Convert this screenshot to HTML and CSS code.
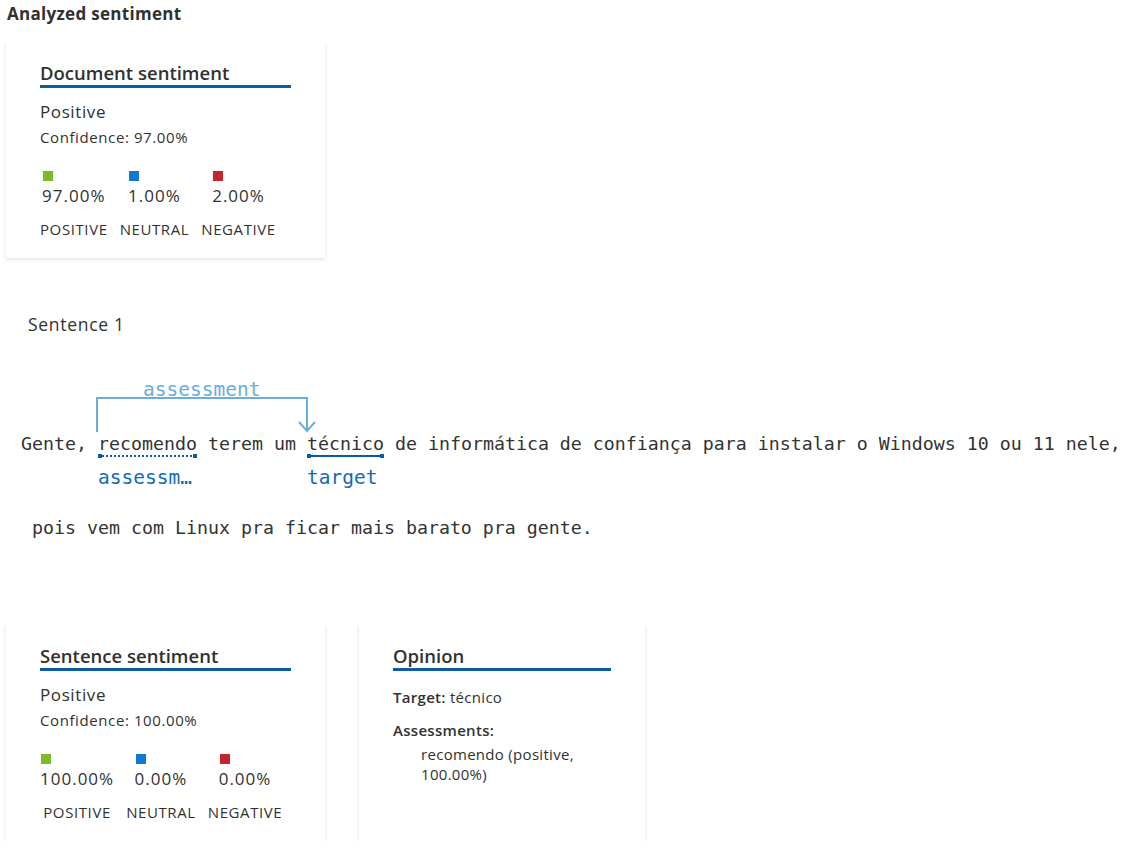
FILE: index.html
```html
<!DOCTYPE html>
<html lang="pt">
<head>
<meta charset="utf-8">
<title>Analyzed sentiment</title>
<link rel="stylesheet" href="styles.css">
</head>
<body>
<main class="page">
  <h2 class="page-title">Analyzed sentiment</h2>

  <section class="card doc-card">
    <h3 class="card-title">Document sentiment</h3>
    <div class="overall">Positive</div>
    <div class="confidence">Confidence: 97.00%</div>
    <div class="legend">
      <div class="col">
        <div class="metric"><span class="sq sq-pos"></span><span class="val">97.00%</span></div>
        <div class="lbl">POSITIVE</div>
      </div>
      <div class="col">
        <div class="metric"><span class="sq sq-neu"></span><span class="val">1.00%</span></div>
        <div class="lbl">NEUTRAL</div>
      </div>
      <div class="col">
        <div class="metric"><span class="sq sq-neg"></span><span class="val">2.00%</span></div>
        <div class="lbl">NEGATIVE</div>
      </div>
    </div>
  </section>

  <div class="sentence-title">Sentence 1</div>

  <div class="diagram">
    <div class="line line1"><svg class="arc" width="230" height="48" viewBox="0 0 230 48"><path d="M7 45 V11 H217 V44" /><path d="M209 35 L217 44 L225 35" /></svg><span class="arc-label">assessment</span>Gente, <span class="tok tok-assess">recomendo<span class="mark mark-dotted"></span><span class="tag">assessm…</span></span> terem um <span class="tok tok-target">técnico<span class="mark mark-solid"></span><span class="tag">target</span></span> de informática de confiança para instalar o Windows 10 ou 11 nele,</div>
    <div class="line line2"> pois vem com Linux pra ficar mais barato pra gente.</div>
  </div>

  <div class="bottom-cards">
    <section class="card sent-card">
      <h3 class="card-title">Sentence sentiment</h3>
      <div class="overall">Positive</div>
      <div class="confidence">Confidence: 100.00%</div>
      <div class="legend">
        <div class="col">
          <div class="metric"><span class="sq sq-pos"></span><span class="val">100.00%</span></div>
          <div class="lbl">POSITIVE</div>
        </div>
        <div class="col">
          <div class="metric"><span class="sq sq-neu"></span><span class="val">0.00%</span></div>
          <div class="lbl">NEUTRAL</div>
        </div>
        <div class="col">
          <div class="metric"><span class="sq sq-neg"></span><span class="val">0.00%</span></div>
          <div class="lbl">NEGATIVE</div>
        </div>
      </div>
    </section>

    <section class="card opinion-card">
      <h3 class="card-title">Opinion</h3>
      <div class="op-row op-target"><span class="op-key">Target:</span> técnico</div>
      <div class="op-row op-assess"><span class="op-key">Assessments:</span></div>
      <div class="op-item">recomendo (positive, 100.00%)</div>
    </section>
  </div>
</main>
</body>
</html>
```

FILE: styles.css
```css
html, body {
  margin: 0;
  padding: 0;
  background: #ffffff;
}

body {
  font-family: "Open Sans", "Noto Sans", sans-serif;
  color: #323130;
}

.page {
  padding: 4px 0 0 6px;
}

.page-title {
  margin: 0 0 0 1px;
  font-size: 17px;
  line-height: 20px;
  font-weight: 700;
  letter-spacing: 0.3px;
  color: #323130;
}

.card {
  box-sizing: border-box;
  height: 217px;
  padding: 20px 34px 0;
  background: #ffffff;
  box-shadow: 0 1.6px 3.6px rgba(0, 0, 0, 0.13), 0 0.3px 0.9px rgba(0, 0, 0, 0.11);
}

.doc-card {
  width: 319px;
  margin-top: 17px;
}

.card-title {
  margin: 0;
  font-size: 18.5px;
  line-height: 24px;
  font-weight: 600;
  color: #323130;
  border-bottom: 3px solid #0f5ca6;
}

.overall {
  margin-top: 13px;
  font-size: 17px;
  line-height: 22px;
  letter-spacing: 0.6px;
}

.confidence {
  margin-top: 5px;
  font-size: 15px;
  line-height: 18px;
  letter-spacing: 0.6px;
}

.legend {
  display: flex;
  gap: 12px;
  margin-top: 25px;
}

.col {
  display: flex;
  flex-direction: column;
  align-items: center;
}

.metric {
  display: flex;
  flex-direction: column;
  align-items: flex-start;
}

.sq {
  display: block;
  width: 10px;
  height: 10px;
  margin-left: 1px;
}

.sq-pos { background: #7cbb26; }
.sq-neu { background: #0f78d4; }
.sq-neg { background: #c4262e; }

.val {
  margin-top: 4px;
  font-size: 17px;
  line-height: 22px;
  letter-spacing: 1px;
}

.lbl {
  margin-top: 13px;
  font-size: 15px;
  line-height: 18px;
  letter-spacing: 0.6px;
}

.sentence-title {
  margin: 55px 0 0 22px;
  font-size: 17.5px;
  line-height: 22px;
  letter-spacing: 0.7px;
}

.diagram {
  margin-left: 15px;
  font-family: "DejaVu Sans Mono", "Liberation Mono", monospace;
  font-size: 18.27px;
  color: #333333;
}

.line {
  white-space: pre;
  line-height: 24px;
}

.line1 {
  position: relative;
  margin-top: 97px;
}

.line2 {
  margin-top: 60px;
}

.arc {
  position: absolute;
  left: 69px;
  top: -45px;
  overflow: visible;
}

.arc path {
  fill: none;
  stroke: #6aaedb;
  stroke-width: 2;
}

.arc-label {
  position: absolute;
  left: 122px;
  top: -54px;
  font-size: 19.5px;
  line-height: 24px;
  color: #6aaedb;
}

.tok {
  position: relative;
  display: inline-block;
}

.mark {
  position: absolute;
  left: 0;
  right: 0;
  top: 23px;
  height: 2px;
}

.mark::before,
.mark::after {
  content: "";
  position: absolute;
  top: -1px;
  width: 4px;
  height: 4px;
  background: #0b59a1;
}

.mark::before { left: 0; }
.mark::after { right: 0; }

.mark-dotted {
  background: repeating-linear-gradient(90deg, #0b59a1 0 2px, transparent 2px 4px);
}

.mark-solid {
  background: #0b59a1;
}

.tag {
  position: absolute;
  left: 0;
  top: 34px;
  font-size: 19.5px;
  line-height: 24px;
  color: #116cb6;
  white-space: nowrap;
}

.bottom-cards {
  display: flex;
  gap: 34px;
  margin-top: 84px;
}

.sent-card {
  width: 319px;
}

.opinion-card {
  width: 286px;
}

.op-row {
  font-size: 15px;
  line-height: 20px;
  letter-spacing: 0.3px;
}

.op-target {
  margin-top: 16px;
}

.op-key {
  font-weight: 600;
}

.op-assess {
  margin-top: 13px;
}

.op-item {
  margin-top: 4px;
  padding-left: 28px;
  font-size: 15px;
  line-height: 20px;
  letter-spacing: 0.3px;
}
```
